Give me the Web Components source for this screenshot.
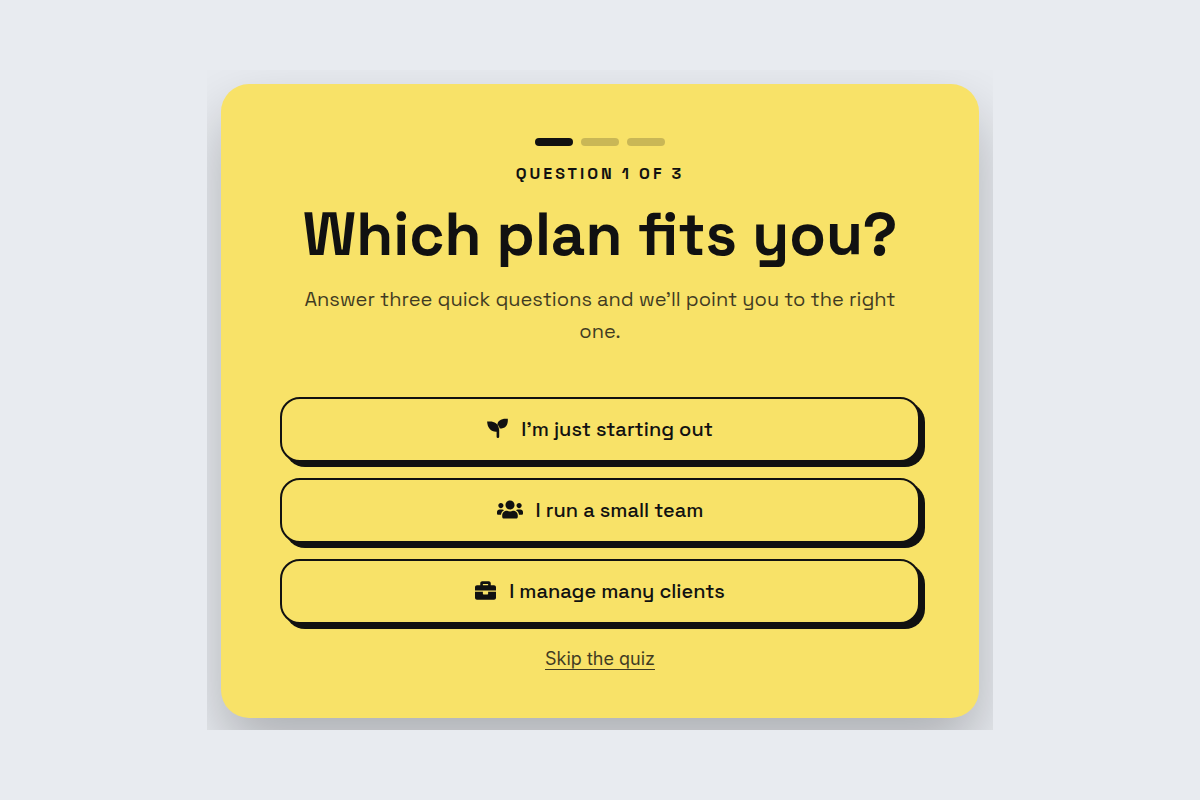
<!DOCTYPE html>
<html lang="en">
<head>
<meta charset="utf-8">
<title>Plan quiz</title>
<style>
html, body { margin: 0; min-height: 100%; background: #e8ebf0; }
body { --ink: #111; --paper: #f8e268; font-family: "Space Grotesk", Inter, "Liberation Sans", sans-serif; color: var(--ink); }
</style>
</head>
<body>
<quiz-page>
  <quiz-card>
    <quiz-progress step="1" total="3"></quiz-progress>
    <quiz-heading>
      <span slot="eyebrow">Question 1 of 3</span>
      <span slot="title">Which plan fits you?</span>
      <span slot="lead">Answer three quick questions and we’ll point you to the right one.</span>
    </quiz-heading>
    <quiz-options>
      <quiz-option icon="seedling">I’m just starting out</quiz-option>
      <quiz-option icon="team">I run a small team</quiz-option>
      <quiz-option icon="briefcase">I manage many clients</quiz-option>
    </quiz-options>
    <quiz-skip>Skip the quiz</quiz-skip>
  </quiz-card>
</quiz-page>
<script>
const define = (name, render) => customElements.define(name, class extends HTMLElement {
  constructor() { super(); this.attachShadow({ mode: "open" }); }
  connectedCallback() { this.shadowRoot.innerHTML = render(this); }
});

define("quiz-page", () => `<style>
  :host { display: flex; min-height: 100vh; align-items: center; justify-content: center; }
  main { box-sizing: border-box; width: 100%; max-width: 786px; padding: 14px 14px 12px; overflow: hidden; }
</style><main><slot></slot></main>`);

define("quiz-card", () => `<style>
  :host { display: flex; flex-direction: column; padding: 54px 59px 46px; border-radius: 28px;
    background: var(--paper); box-shadow: 0 30px 60px rgba(0,0,0,.25); text-align: center; }
</style><slot></slot>`);

define("quiz-progress", el => `<style>
  :host { display: flex; justify-content: center; gap: 8px; }
  i { width: 38px; height: 8px; border-radius: 4px; background: var(--ink); opacity: .2; }
  i.on { opacity: 1; }
</style>${Array.from({ length: +el.getAttribute("total") }, (_, n) =>
  `<i class="${n < +el.getAttribute("step") ? "on" : ""}"></i>`).join("")}`);

define("quiz-heading", () => `<style>
  :host { display: block; }
  p, h1 { margin: 0; }
  .eyebrow { margin-top: 16px; font-size: 16px; line-height: 24px; font-weight: 600; letter-spacing: 3px; text-transform: uppercase; }
  h1 { margin-top: 17px; font-size: 60px; line-height: 64px; font-weight: 600; }
  .lead { margin-top: 16px; padding: 0 12px; font-size: 20px; line-height: 32px; font-weight: 400; opacity: .8; }
</style><p class="eyebrow"><slot name="eyebrow"></slot></p>
<h1><slot name="title"></slot></h1>
<p class="lead"><slot name="lead"></slot></p>`);

define("quiz-options", () => `<style>
  :host { display: grid; gap: 16px; margin-top: 50px; }
</style><slot></slot>`);

const icons = {
  seedling: [21, 21, 21, "M20.800 .8C14.800 0 10.500 2.700 10.400 6.600C11.700 7.800 12.500 9.300 12.700 10.600C18.600 10.600 21.300 6.800 20.800 .8ZM.1 3.600C6.500 2.600 11.200 5.300 11.800 10L12.200 12V18.700A1.200 1.200 0 0 1 9.600 18.700V13.700C4.300 14 .5 10.500 .1 3.600Z"],
  team: [640, 512, 26, "M96 224c35.300 0 64-28.700 64-64s-28.700-64-64-64-64 28.700-64 64 28.700 64 64 64zm448 0c35.300 0 64-28.700 64-64s-28.700-64-64-64-64 28.700-64 64 28.700 64 64 64zm32 32h-64c-17.600 0-33.500 7.100-45.100 18.600 40.300 22.100 68.900 62 75.100 109.400h66c17.700 0 32-14.300 32-32v-32c0-35.300-28.700-64-64-64zm-256 0c61.900 0 112-50.100 112-112S381.900 32 320 32 208 82.100 208 144s50.100 112 112 112zm76.800 32h-8.300c-20.800 10-43.900 16-68.500 16s-47.600-6-68.500-16h-8.300C179.600 288 128 339.600 128 403.200V432c0 26.500 21.500 48 48 48h288c26.500 0 48-21.500 48-48v-28.800c0-63.600-51.600-115.200-115.200-115.200zm-223.700-13.400C161.500 263.100 145.600 256 128 256H64c-35.300 0-64 28.700-64 64v32c0 17.700 14.300 32 32 32h65.900c6.300-47.400 34.900-87.300 75.200-109.400z"],
  briefcase: [512, 512, 21, "M320 336c0 8.840-7.160 16-16 16h-96c-8.840 0-16-7.160-16-16v-48H0v144c0 25.600 22.400 48 48 48h416c25.600 0 48-22.400 48-48V288H320v48zm144-208h-80V80c0-25.600-22.400-48-48-48H176c-25.600 0-48 22.400-48 48v48H48c-25.600 0-48 22.400-48 48v80h512v-80c0-25.600-22.400-48-48-48zm-144 0H192V96h128v32z"]
};

define("quiz-option", el => {
  const [w, h, size, path] = icons[el.getAttribute("icon")];
  return `<style>
  :host { display: block; }
  button { display: flex; align-items: center; justify-content: center; gap: 13px; width: 100%; min-height: 65px;
    margin: 0; padding: 7px 24px 9px; border: 2px solid var(--ink); border-radius: 20px; background: var(--paper);
    box-shadow: 5px 5px 0 var(--ink); color: inherit; font: inherit; font-size: 20px; line-height: 28px; font-weight: 500; cursor: pointer; }
  svg { flex: none; fill: currentColor; }
</style><button type="button"><svg width="${size}" height="21" viewBox="0 0 ${w} ${h}" aria-hidden="true"><path d="${path}"/></svg><span><slot></slot></span></button>`;
});

define("quiz-skip", () => `<style>
  :host { display: block; margin-top: 22px; font-family: Inter, "Liberation Sans", sans-serif; font-size: 18px; line-height: 26px; }
  a { color: inherit; opacity: .8; text-decoration: underline; text-underline-offset: 4px; text-decoration-thickness: 1px; }
</style><a href="#skip"><slot></slot></a>`);
</script>
</body>
</html>
